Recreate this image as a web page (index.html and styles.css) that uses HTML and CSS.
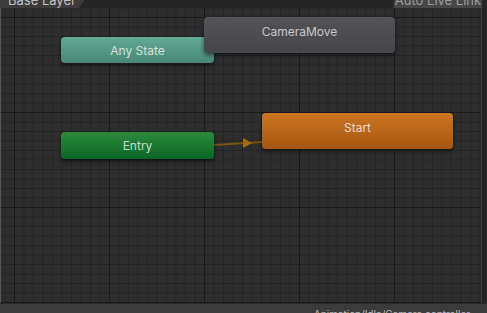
FILE: index.html
```html
<!DOCTYPE html>
<html lang="en">
<head>
  <meta charset="UTF-8" />
  <title>Animator - Base Layer</title>
  <link rel="stylesheet" href="styles.css">
</head>
<body>
  <div class="window">
    <div class="toolbar">
      <div class="crumb">Base Layer</div>
      <div class="live-btn">Auto Live Link</div>
    </div>

    <div class="graph">
      <svg class="transition" width="487" height="295" viewBox="0 0 487 295" aria-hidden="true">
        <line x1="214" y1="137" x2="262" y2="134" stroke="#7d520e" stroke-width="2" />
        <polygon points="243,130 252,135 243,140" fill="#a36a12" />
      </svg>

      <div class="node any-state">Any State</div>
      <div class="node entry">Entry</div>
      <div class="node start">Start</div>
      <div class="node camera">CameraMove</div>
    </div>

    <div class="status">
      <span class="path">Animation/Idle/Camera.controller</span>
    </div>
  </div>
</body>
</html>
```

FILE: styles.css
```css
/* RESET */
* { margin: 0; padding: 0; box-sizing: border-box; }
body {
  background: #232323;
  font-family: Inter, "Liberation Sans", sans-serif;
  overflow: hidden;
  width: 487px;
  height: 313px;
}

.window {
  display: flex;
  flex-direction: column;
  width: 487px;
  height: 313px;
}

/* TOOLBAR */
.toolbar {
  height: 8px;
  display: flex;
  justify-content: space-between;
  background: #262626;
  overflow: hidden;
  padding-right: 5px;
}
.crumb {
  width: 88px;
  padding-left: 8px;
  background: #3c3c3c;
  color: #c2c2c2;
  font-size: 13px;
  line-height: 13px;
  margin-top: -6px;
  height: 14px;
  clip-path: polygon(0 0, 100% 0, 90% 100%, 0 100%);
}
.live-btn {
  width: 89px;
  background: #474747;
  color: #9c9c9c;
  font-size: 13px;
  line-height: 13px;
  margin-top: -6px;
  height: 14px;
  text-align: center;
  border-left: 1px solid #2e2e2e;
}

/* GRAPH */
.graph {
  position: relative;
  flex: 1;
  overflow: hidden;
  border-left: 1px solid #555;
  border-right: 5px solid #232323;
  background-color: #2e2e2e;
  background-image:
    linear-gradient(to right, #1a1a1a 1px, transparent 1px),
    linear-gradient(to bottom, #1a1a1a 1px, transparent 1px),
    linear-gradient(to right, #242424 1px, transparent 1px),
    linear-gradient(to bottom, #242424 1px, transparent 1px);
  background-size: 95px 95px, 95px 95px, 9.5px 9.5px, 9.5px 9.5px;
  background-position: 13px 9px;
}
.graph::after {
  content: "";
  position: absolute;
  top: 0; right: 0; bottom: 0;
  width: 1px;
  background: #3e3e3e;
}

.transition {
  position: absolute;
  left: -1px;
  top: 0;
}

.node {
  position: absolute;
  display: flex;
  justify-content: center;
  font-size: 12px;
  border-radius: 4px;
  box-shadow: 0 2px 4px rgba(0, 0, 0, 0.55);
}

.any-state {
  left: 60px;
  top: 29px;
  width: 153px;
  height: 26px;
  align-items: center;
  background: linear-gradient(to bottom, #62a996, #4a8676);
  color: #d2e2dc;
}

.camera {
  left: 203px;
  top: 9px;
  width: 191px;
  height: 36px;
  padding-top: 7px;
  background: linear-gradient(to bottom, #525257, #46464a);
  color: #c9c9cc;
}

.entry {
  left: 60px;
  top: 124px;
  width: 153px;
  height: 27px;
  align-items: center;
  background: linear-gradient(to bottom, #2c8a40, #0b6624);
  color: #c3dcc6;
}

.start {
  left: 261px;
  top: 105px;
  width: 191px;
  height: 36px;
  padding-top: 7px;
  background: linear-gradient(to bottom, #cd7623, #a4560f);
  color: #ecd9c4;
}

/* STATUS BAR */
.status {
  height: 10px;
  background: #3b3b3b;
  border-top: 1px solid #2a2a2a;
  overflow: hidden;
  display: flex;
  justify-content: flex-end;
  padding-right: 17px;
}
.path {
  color: #bdbdbd;
  font-size: 10px;
  line-height: 10px;
  margin-top: 5px;
}
```
